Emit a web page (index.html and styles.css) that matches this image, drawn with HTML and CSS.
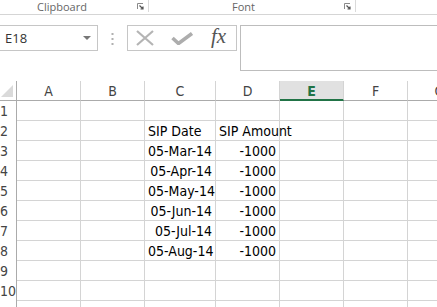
FILE: index.html
```html
<!DOCTYPE html>
<html lang="en">

<head>
    <meta charset="UTF-8">
    <title>SIP Sheet</title>
    <link rel="stylesheet" href="styles.css">
</head>

<body>

    <div class="ribbon">
        <div class="group group-clipboard">
            <span class="group-label">Clipboard</span>
            <svg class="launcher" width="7" height="7" viewBox="0 0 7 7">
                <path d="M0.5 6V0.5H6" fill="none" stroke="#8a8a8a" stroke-width="1"/>
                <path d="M2.5 2.5L6 6M3.5 6H6V3.5" fill="none" stroke="#555" stroke-width="1.2"/>
            </svg>
        </div>
        <div class="group group-font">
            <span class="group-label">Font</span>
            <svg class="launcher" width="7" height="7" viewBox="0 0 7 7">
                <path d="M0.5 6V0.5H6" fill="none" stroke="#8a8a8a" stroke-width="1"/>
                <path d="M2.5 2.5L6 6M3.5 6H6V3.5" fill="none" stroke="#555" stroke-width="1.2"/>
            </svg>
        </div>
    </div>

    <div class="formula-bar">
        <div class="name-box">
            <span>E18</span>
            <svg width="8" height="4" viewBox="0 0 8 4"><path d="M0 0H8L4 4Z" fill="#777"/></svg>
        </div>
        <svg class="grip" width="3" height="12" viewBox="0 0 3 12">
            <rect x="0.5" y="0" width="2" height="2" fill="#b0b0b0"/>
            <rect x="0.5" y="5" width="2" height="2" fill="#b0b0b0"/>
            <rect x="0.5" y="10" width="2" height="2" fill="#b0b0b0"/>
        </svg>
        <div class="fx-box">
            <svg width="18" height="16" viewBox="0 0 18 16">
                <path d="M1 1L17 15M17 1L1 15" stroke="#b4b4b4" stroke-width="2.2" fill="none"/>
            </svg>
            <svg width="22" height="13" viewBox="0 0 22 13">
                <path d="M1.5 6L7.5 11.5L21 1.5" stroke="#adadad" stroke-width="3.6" fill="none"/>
            </svg>
            <span class="fx">fx</span>
        </div>
        <div class="formula-input"></div>
    </div>

    <div class="sheet">
        <div class="corner">
            <svg width="16" height="19" viewBox="0 0 16 19"><path d="M1 16H13V4Z" fill="#dadada"/></svg>
        </div>
        <div class="col-head">A</div>
        <div class="col-head">B</div>
        <div class="col-head">C</div>
        <div class="col-head">D</div>
        <div class="col-head selected">E</div>
        <div class="col-head">F</div>
        <div class="col-head">G</div>
        <div class="col-head last"></div>
    </div>

    <script>
        const rows = [
            ["", ""],
            ["SIP Date", "SIP Amount"],
            ["05-Mar-14", "-1000"],
            ["05-Apr-14", "-1000"],
            ["05-May-14", "-1000"],
            ["05-Jun-14", "-1000"],
            ["05-Jul-14", "-1000"],
            ["05-Aug-14", "-1000"],
            ["", ""],
            ["", ""],
            ["", ""]
        ];

        let html = "";
        rows.forEach((r, i) => {
            let align = i == 1 ? "left" : "right";
            // last row only peeks in at the bottom edge
            let num = i < 10 ? i + 1 : "";
            html += `
                <div class="row-head">${num}</div>
                <div class="cell"></div>
                <div class="cell"></div>
                <div class="cell ${align}">${r[0]}</div>
                <div class="cell ${align}">${r[1]}</div>
                <div class="cell"></div>
                <div class="cell"></div>
                <div class="cell"></div>
                <div class="cell"></div>
            `;
        });
        document.querySelector('.sheet').insertAdjacentHTML('beforeend', html);
    </script>
</body>

</html>
```

FILE: styles.css
```css
body {
    margin: 0;
    padding: 0;
    width: 437px;
    height: 307px;
    overflow: hidden;
    background-color: #fff;
    font-family: "Liberation Sans Narrow", "DejaVu Sans Condensed", Roboto, sans-serif;
}

/* ribbon group labels */
.ribbon {
    display: flex;
    height: 14px;
    border-bottom: 1px solid #d5d5d5;
}

.group {
    display: flex;
    align-items: flex-start;
    height: 12px;
    border-right: 1px solid #dadada;
    box-sizing: border-box;
}

.group-clipboard {
    width: 149px;
}

.group-font {
    width: 207px;
}

.group-label {
    font-family: "Open Sans", sans-serif;
    font-size: 11px;
    line-height: 12px;
    margin-top: 1px;
    color: #666;
}

.group-clipboard .group-label {
    margin-left: 37px;
    width: 100px;
}

.group-font .group-label {
    margin-left: 83px;
    width: 112px;
}

.launcher {
    margin-top: 3px;
}

/* formula bar */
.formula-bar {
    display: flex;
    align-items: flex-start;
    height: 56px;
    padding-top: 10px;
}

.name-box {
    display: flex;
    align-items: center;
    justify-content: space-between;
    width: 99px;
    height: 26px;
    margin-left: -1px;
    padding: 0 6px 0 5px;
    border: 1px solid #c6c6c6;
    box-sizing: border-box;
    font-family: "Open Sans", sans-serif;
    font-size: 13px;
    color: #333;
}

.grip {
    margin: 8px 0 0 13px;
}

.fx-box {
    display: flex;
    align-items: center;
    width: 110px;
    height: 26px;
    margin-left: 13px;
    padding-left: 8px;
    gap: 17px;
    border: 1px solid #c6c6c6;
    box-sizing: border-box;
}

.fx {
    font-family: "Liberation Serif", serif;
    font-style: italic;
    font-size: 21px;
    color: #555;
    margin-left: 1px;
    margin-top: -3px;
}

.formula-input {
    flex: 1;
    height: 46px;
    margin-left: 3px;
    margin-right: -2px;
    border: 1px solid #bdbdbd;
    box-sizing: border-box;
}

/* sheet grid */
.sheet {
    display: grid;
    grid-template-columns: 17px 64px 64px 71px 64px 64px 64px 64px 64px;
    grid-auto-rows: 20px;
}

.corner,
.col-head {
    border-bottom: 1px solid #ababab;
    box-sizing: border-box;
}

.corner {
    border-right: 1px solid #ababab;
}

.col-head {
    border-right: 1px solid #d4d4d4;
    text-align: center;
    font-size: 14px;
    line-height: 20px;
    color: #444;
}

.col-head.selected {
    background-color: #e1e1e1;
    border-bottom: 2px solid #217346;
    color: #217346;
    font-weight: bold;
}

.row-head {
    width: 17px;
    padding-right: 9px;
    border-right: 1px solid #ababab;
    box-sizing: border-box;
    text-align: center;
    font-size: 14px;
    line-height: 20px;
    color: #444;
}

.cell {
    border-right: 1px solid #d4d4d4;
    border-bottom: 1px solid #d4d4d4;
    box-sizing: border-box;
    padding: 0 3px;
    font-size: 14px;
    line-height: 20px;
    color: #000;
    white-space: nowrap;
}

.cell.right {
    text-align: right;
}

.cell.left {
    text-align: left;
}
```
